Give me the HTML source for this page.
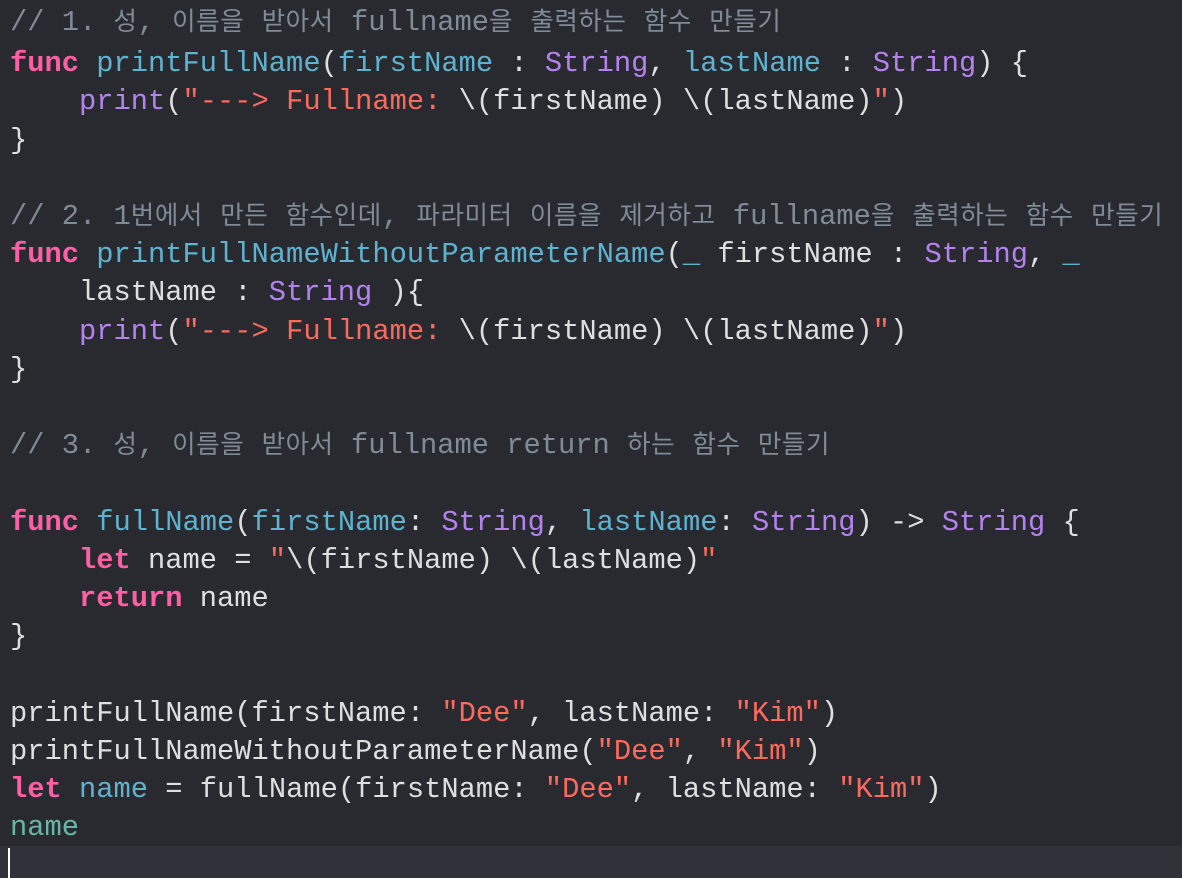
<!DOCTYPE html>
<html><head><meta charset="utf-8"><style>
html,body{margin:0;padding:0;background:#292a30;width:1182px;height:878px;overflow:hidden}
pre{margin:0;position:absolute;left:10px;top:7px;font-family:"Liberation Mono","Noto Sans CJK KR",monospace;font-size:28.75px;line-height:38.2px;color:#dfdfe0;z-index:2}
.k{font-family:"Noto Sans CJK KR",sans-serif;font-size:25.5px;letter-spacing:0.6px;line-height:0}
.c{color:#7f8c98}
.up{position:relative;top:-3px}
.kw{color:#fc5fa3;font-weight:bold}
.d{color:#5fb3cf}
.t{color:#b482ec}
.p{color:#b482ec}
.s{color:#fc6a5d}
.v{color:#67b7a4}
.hl{position:absolute;left:0;top:846px;width:1182px;height:32px;background:#2f3239}
.cur{position:absolute;left:8px;top:848px;width:2px;height:30px;background:#fff;z-index:3}
</style></head><body>
<div class="hl"></div><div class="cur"></div>
<pre><span class="c up">// 1. <span class="k">성</span>, <span class="k">이름을</span> <span class="k">받아서</span> fullname<span class="k">을</span> <span class="k">출력하는</span> <span class="k">함수</span> <span class="k">만들기</span></span>
<span class="kw">func</span> <span class="d">printFullName</span>(<span class="d">firstName</span> : <span class="t">String</span>, <span class="d">lastName</span> : <span class="t">String</span>) {
    <span class="p">print</span>(<span class="s">"---&gt; Fullname: </span>\(firstName) \(lastName)<span class="s">"</span>)
}

<span class="c">// 2. 1<span class="k">번에서</span> <span class="k">만든</span> <span class="k">함수인데</span>, <span class="k">파라미터</span> <span class="k">이름을</span> <span class="k">제거하고</span> fullname<span class="k">을</span> <span class="k">출력하는</span> <span class="k">함수</span> <span class="k">만들기</span></span>
<span class="kw">func</span> <span class="d">printFullNameWithoutParameterName</span>(<span class="d">_</span> firstName : <span class="t">String</span>, <span class="d">_</span>
    lastName : <span class="t">String</span> ){
    <span class="p">print</span>(<span class="s">"---&gt; Fullname: </span>\(firstName) \(lastName)<span class="s">"</span>)
}

<span class="c">// 3. <span class="k">성</span>, <span class="k">이름을</span> <span class="k">받아서</span> fullname return <span class="k">하는</span> <span class="k">함수</span> <span class="k">만들기</span></span>

<span class="kw">func</span> <span class="d">fullName</span>(<span class="d">firstName</span>: <span class="t">String</span>, <span class="d">lastName</span>: <span class="t">String</span>) -&gt; <span class="t">String</span> {
    <span class="kw">let</span> name = <span class="s">"</span>\(firstName) \(lastName)<span class="s">"</span>
    <span class="kw">return</span> name
}

printFullName(firstName: <span class="s">"Dee"</span>, lastName: <span class="s">"Kim"</span>)
printFullNameWithoutParameterName(<span class="s">"Dee"</span>, <span class="s">"Kim"</span>)
<span class="kw">let</span> <span class="d">name</span> = fullName(firstName: <span class="s">"Dee"</span>, lastName: <span class="s">"Kim"</span>)
<span class="v">name</span></pre>
</body></html>
